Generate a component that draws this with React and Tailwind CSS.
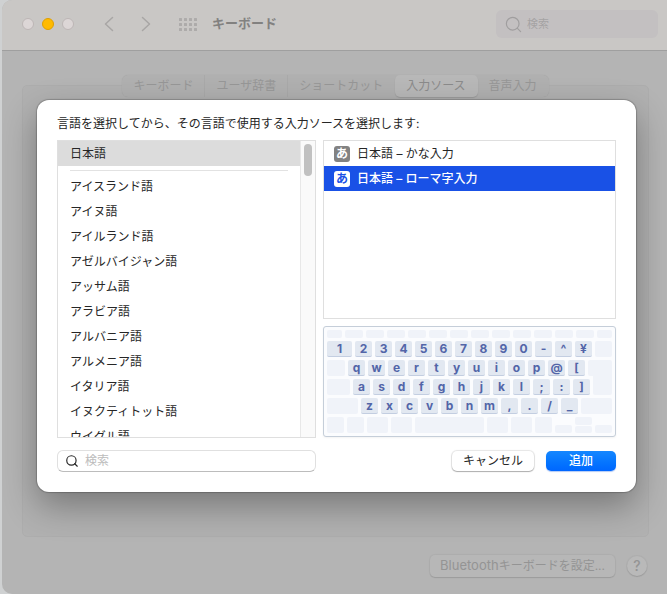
import { Search } from "lucide-react";
import clsx from "clsx";

const tabs = ["キーボード", "ユーザ辞書", "ショートカット", "入力ソース", "音声入力"];

const languages = [
  "アイスランド語",
  "アイヌ語",
  "アイルランド語",
  "アゼルバイジャン語",
  "アッサム語",
  "アラビア語",
  "アルバニア語",
  "アルメニア語",
  "イタリア語",
  "イヌクティトット語",
  "ウイグル語",
];

const sources = [
  { name: "日本語 – かな入力", selected: false },
  { name: "日本語 – ローマ字入力", selected: true },
];

const Key = ({ children, className = "w-[17px]" }) => (
  <span
    className={clsx(
      "flex h-4 items-center justify-center rounded-xs border-b border-[#c3cee1] bg-[#e2e8f1] text-xs font-bold text-[#5265a8]",
      className
    )}
  >
    {children}
  </span>
);

const Blank = ({ className }) => (
  <span className={clsx("rounded-xs bg-[#f0f3f9]", className)} />
);

const Keys = ({ chars }) => chars.split("").map((c) => <Key key={c}>{c}</Key>);

const Keyboard = () => (
  <div className="flex flex-col gap-[3px] rounded-[3px] border border-[#c5ced9] bg-[#fbfcfe] p-[3px] shadow-xs">
    {/* Function keys */}
    <div className="flex h-2 gap-[3px]">
      <Blank className="w-[15px]" />
      {Array.from({ length: 12 }, (_, i) => (
        <Blank key={i} className="flex-1" />
      ))}
      <Blank className="w-[15px]" />
    </div>
    <div className="flex h-4 gap-[3px]">
      <Key className="flex-1">1</Key>
      <Keys chars="234567890-^¥" />
      <Blank className="w-[17px]" />
    </div>
    <div className="flex h-4 gap-[3px]">
      <Blank className="flex-1" />
      <Keys chars="qwertyuiop@[" />
      <Blank className="w-6 rounded-br-none" />
    </div>
    {/* The return key reaches up into the row above */}
    <div className="flex h-4 gap-[3px]">
      <Blank className="flex-1" />
      <Keys chars="asdfghjkl;:]" />
      <Blank className="-mt-[3px] w-[19px] rounded-t-none" />
    </div>
    <div className="flex h-4 gap-[3px]">
      <Blank className="flex-1" />
      <Keys chars="zxcvbnm,./_" />
      <Blank className="w-[31px]" />
    </div>
    <div className="flex h-4 gap-[3px]">
      <Blank className="w-[17px]" />
      <Blank className="w-[17px]" />
      <Blank className="w-[21px]" />
      <Blank className="w-[21px]" />
      <Blank className="flex-1" />
      <Blank className="w-[21px]" />
      <Blank className="w-[21px]" />
      <Blank className="w-[17px]" />
      <Blank className="h-2 w-[17px] self-end" />
      <span className="flex w-[17px] flex-col gap-px">
        <Blank className="flex-1" />
        <Blank className="flex-1" />
      </span>
      <Blank className="h-2 w-[17px] self-end" />
    </div>
  </div>
);

const Toolbar = () => (
  <header className="flex h-[51px] items-center border-b border-[#9f9f9f] bg-[#c9c7c5] pr-[9px] pb-[2px] pl-5">
    <div className="flex gap-2">
      <button aria-label="閉じる" className="size-3 rounded-full border border-[#bdb6b6] bg-[#dcd6d6]" />
      <button aria-label="しまう" className="size-3 rounded-full border border-[#e0a000] bg-[#ffba00]" />
      <button aria-label="拡大" className="size-3 rounded-full border border-[#bdb6b6] bg-[#dcd6d6]" />
    </div>
    <div className="ml-[26px] flex gap-4 text-[#a8a6a5]">
      <button aria-label="戻る">
        <svg width="20" height="20" viewBox="0 0 20 20" fill="none" stroke="currentColor" strokeWidth="1.5" strokeLinecap="round" strokeLinejoin="round">
          <path d="M12.5 3.5 5.5 10l7 6.5" />
        </svg>
      </button>
      <button aria-label="進む">
        <svg width="20" height="20" viewBox="0 0 20 20" fill="none" stroke="currentColor" strokeWidth="1.5" strokeLinecap="round" strokeLinejoin="round">
          <path d="m6.5 3.5 7 6.5-7 6.5" />
        </svg>
      </button>
    </div>
    <button aria-label="すべてを表示" className="ml-[22px] text-[#adabaa]">
      <svg width="20" height="14" viewBox="0 0 20 14" fill="currentColor">
        {[0, 1, 2].map((row) =>
          [0, 1, 2, 3].map((col) => (
            <rect key={`${row}-${col}`} x={1 + col * 5} y={1 + row * 5} width="3" height="3" rx="0.6" />
          ))
        )}
      </svg>
    </button>
    <h1 className="ml-[14px] text-[13px] font-bold text-[#828180]">キーボード</h1>
    <label className="ml-auto flex h-7 w-[162px] items-center gap-1 rounded-md bg-[#c3c0c1] px-2 text-[#a09e9f]">
      <Search size={19} strokeWidth={1.5} className="shrink-0" />
      <input aria-label="検索" placeholder="検索" className="w-full min-w-0 text-[11px] outline-none placeholder:text-[#a5a3a4]" />
    </label>
  </header>
);

const Dialog = () => (
  <section
    role="dialog"
    aria-labelledby="dialog-title"
    className="absolute inset-x-0 top-[100px] mr-[31px] ml-[35px] rounded-xl bg-white px-5 pt-4 pb-5 text-[#262626] shadow-[0_0_1px_1px_rgba(0,0,0,0.2),0_14px_34px_rgba(0,0,0,0.32)]"
  >
    <h2 id="dialog-title" className="mb-2 text-xs leading-4">
      言語を選択してから、その言語で使用する入力ソースを選択します:
    </h2>

    <div className="flex gap-[7px]">
      {/* Languages */}
      <div className="flex h-[298px] w-[259px] overflow-hidden border border-[#dfdfdf]">
        <ul className="flex-1 text-xs leading-[25px]">
          <li className="bg-[#dcdcdc] pl-3">日本語</li>
          <li className="mr-3 mb-[3px] ml-3 h-[5px] border-b border-[#e2e2e2]" />
          {languages.map((language) => (
            <li key={language} className="pl-3">
              {language}
            </li>
          ))}
        </ul>
        <div className="w-[15px] border-l border-[#e8e8e8] bg-[#fafafa] px-[3px] py-[3px]">
          <div className="h-8 w-2 rounded-full bg-[#c1c1c1]" />
        </div>
      </div>

      {/* Input sources */}
      <div className="flex flex-1 flex-col gap-[7px] pb-px">
        <ul className="flex-1 border border-[#dfdfdf] text-xs">
          {sources.map((source) => (
            <li
              key={source.name}
              className={clsx(
                "flex h-[25px] items-center gap-[7px] pl-[10px]",
                source.selected && "bg-[#1951e6] font-medium text-white"
              )}
            >
              <span
                className={clsx(
                  "flex size-4 items-center justify-center rounded-[3px] text-xs leading-4 font-bold",
                  source.selected ? "bg-white text-[#1951e6]" : "bg-[#828282] text-white"
                )}
              >
                あ
              </span>
              {source.name}
            </li>
          ))}
        </ul>
        <Keyboard />
      </div>
    </div>

    <div className="mt-3 flex h-[22px] items-center">
      <label className="flex h-[22px] w-[259px] items-center gap-[6px] rounded-md border border-[#e0e0e0] border-b-[#bcbcbc] pl-[7px]">
        <Search size={14} strokeWidth={2} className="shrink-0" />
        <input aria-label="言語を検索" placeholder="検索" className="w-full min-w-0 text-xs outline-none placeholder:text-[#bcbcbc]" />
      </label>
      <button className="ml-auto h-5 w-[82px] rounded-[5px] bg-white text-xs shadow-[0_0_1px_1px_rgba(0,0,0,0.1),0_1px_1px_rgba(0,0,0,0.25)]">
        キャンセル
      </button>
      <button className="ml-3 h-5 w-[70px] rounded-[5px] bg-linear-to-b from-[#1587ff] to-[#0066ff] text-xs font-medium text-white shadow-[0_1px_1px_rgba(0,80,220,0.3)]">
        追加
      </button>
    </div>
  </section>
);

const App = () => {
  return (
    <div className="min-h-screen bg-[#cfd1d2] pl-[2px] font-[Inter,'Noto_Sans_CJK_JP',sans-serif]">
      <main className="relative flex min-h-screen flex-col overflow-hidden rounded-l-[10px] bg-[#b4b4b4]">
        <Toolbar />

        <div className="flex flex-1 flex-col pt-6 pr-[18px] pb-[17px] pl-5">
          <nav className="z-0 flex self-center rounded-md bg-[#b0b0b0] text-xs text-[#979797] shadow-[0_0_1px_rgba(0,0,0,0.12)]">
            {tabs.map((tab, i) => (
              <button
                key={tab}
                className={clsx(
                  "h-[22px] border-r px-[11px]",
                  i < 2 ? "border-[#a9a9a9]" : "border-transparent",
                  i === 3 && "rounded-[5px] bg-[#b8b8b8] text-[#8b8b8b] shadow-[0_1px_1px_rgba(0,0,0,0.12)]"
                )}
              >
                {tab}
              </button>
            ))}
          </nav>
          <div className="-mt-3 flex-1 rounded-[5px] border border-[#adadad] bg-[#b1b1b1]" />
          <footer className="mt-[18px] flex items-center justify-end gap-3 pr-[2px] text-[#949494]">
            <button className="h-[22px] rounded-[5px] bg-[#b7b7b7] px-[10px] text-xs shadow-[0_0_1px_1px_rgba(0,0,0,0.04),0_1px_1px_rgba(0,0,0,0.1)]">
              <span className="text-[13px]">Bluetooth</span>キーボードを設定...
            </button>
            <button aria-label="ヘルプ" className="size-5 rounded-full bg-[#b9b9b9] text-sm leading-5 font-medium shadow-[0_0_1px_1px_rgba(0,0,0,0.04),0_1px_1px_rgba(0,0,0,0.1)]">
              ?
            </button>
          </footer>
        </div>

        <Dialog />
      </main>
    </div>
  );
};

export default App;
